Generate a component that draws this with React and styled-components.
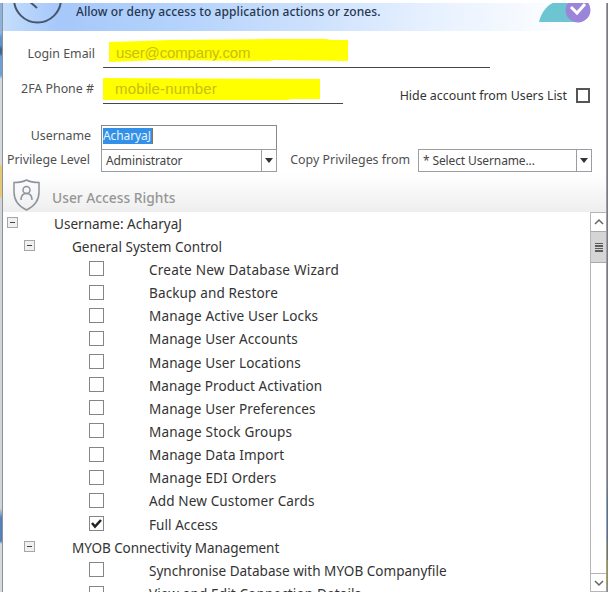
import React from 'react';
import styled, { createGlobalStyle } from 'styled-components';

const GlobalStyle = createGlobalStyle`
  * {
    box-sizing: border-box;
  }

  body {
    margin: 0;
    background: #fff;
    font-family: 'Noto Sans', 'Open Sans', sans-serif;
    font-size: 13px;
    color: #333;
  }
`;

const Screen = styled.div`
  display: flex;
  width: 608px;
  height: 593px;
  padding: 3px 0 1px;
  overflow: hidden;
`;

const leftEdge = 'linear-gradient(#8db2dc 0 30px, #5c93cf 35px 42px, #40658c 46px 50px, #6da0d8 54px 72px, #d6d9dc 76px 160px, #e3ca72 164px 193px, #d2d5d8 196px 505px, #5580b8 515px 538px, #d6d9dc 541px)';
const rightEdge = 'linear-gradient(#777b84 0 480px, #52719c 500px 536px, #77735f 540px 556px, #9c9438 558px 580px, #8c8c8c 584px)';

const Edge = styled.div`
  flex: none;
  width: ${({ $right }) => ($right ? 1 : 2)}px;
  background: ${({ $right }) => ($right ? rightEdge : leftEdge)};
`;

const Window = styled.main`
  flex: 1;
  display: flex;
  flex-direction: column;
  min-width: 0;
  border-left: 1px solid #8e9297;
  border-right: 1px solid #9b9fa5;
`;

const Header = styled.header`
  flex: none;
  display: flex;
  justify-content: space-between;
  height: 28px;
  padding: 0 14px 0 10px;
  background: linear-gradient(90deg, #c4defc 0, #a6c8fa 55px, #b3d2fc 170px, #cfe2fd 320px, #e5f0ff 420px, #f8fbff 530px, #fff 590px);
`;

const HeaderTitle = styled.div`
  flex: 1;
  padding-left: 13px;
  font-size: 12px;
  font-weight: 500;
  line-height: 17px;
  letter-spacing: 0.09px;
  color: #25374f;
  white-space: nowrap;
`;

const Form = styled.section`
  flex: none;
  height: 143px;
  padding-top: 8px;
`;

const Line = styled.div`
  display: flex;
  align-items: flex-start;
  height: ${({ $height }) => $height}px;
`;

const Label = styled.label`
  flex: none;
  width: ${({ $width }) => $width}px;
  padding-top: ${({ $top }) => $top || 0}px;
  padding-right: ${({ $right }) => $right || 0}px;
  font-size: 12.4px;
  line-height: 18px;
  text-align: right;
  white-space: nowrap;
  color: ${({ $dark }) => ($dark ? '#333' : '#505050')};
`;

const Underlined = styled.div`
  display: flex;
  width: ${({ $width }) => $width}px;
  height: ${({ $height }) => $height}px;
  margin-left: ${({ $left }) => $left}px;
  border-bottom: 1px solid #484848;
`;

const Marker = styled.div`
  width: ${({ $width }) => $width}px;
  height: ${({ $height }) => $height}px;
  margin-left: ${({ $left }) => $left || 0}px;
  padding: ${({ $pad }) => $pad};
  background: #ff0;
  clip-path: ${({ $shape }) => $shape};
  font: 15px/20px 'Liberation Sans', Arial, sans-serif;
  letter-spacing: ${({ $tracking }) => $tracking || 0}px;
  color: #c9bd12;
  white-space: nowrap;
`;

const HideBox = styled.span`
  width: 14px;
  height: 15px;
  margin: 10px 0 0 9px;
  border: 2px solid #555;
`;

const TextInput = styled.div`
  width: 176px;
  height: 24px;
  margin-left: 7px;
  padding: 2px 1px;
  border: 1px solid #858a90;
  border-bottom: 0;
`;

const Selection = styled.span`
  display: block;
  width: 50px;
  height: 16px;
  background: #3390e8;
  border-right: 1px solid #8b7448;
  font-size: 12px;
  line-height: 15px;
  letter-spacing: -0.1px;
  color: #e8f4ff;
`;

const Combo = styled.div`
  display: flex;
  width: ${({ $width }) => $width}px;
  height: 23px;
  margin-left: 7px;
  border: 1px solid #9a9da1;
  font-size: 12px;
  line-height: 22px;
  color: #444;
`;

const ComboValue = styled.span`
  flex: 1;
  padding-left: 4px;
  letter-spacing: -0.12px;
  white-space: nowrap;
`;

const ComboButton = styled.span`
  display: flex;
  align-items: center;
  justify-content: center;
  width: 15px;
  border-left: 1px solid #9a9da1;

  &::after {
    content: '';
    border: 4px solid transparent;
    border-top: 5px solid #333;
    border-bottom: 0;
  }
`;

const RightsBar = styled.div`
  flex: none;
  display: flex;
  height: 38px;
  padding-left: 9px;
  background: linear-gradient(#fff, #eee);
`;

const RightsTitle = styled.h2`
  margin: 14px 0 0 10px;
  font-size: 13.8px;
  font-weight: 500;
  line-height: 20px;
  color: #969696;
`;

const Body = styled.section`
  flex: 1;
  display: flex;
  min-height: 0;
`;

const Tree = styled.div`
  flex: 1;
  overflow: hidden;
`;

const Row = styled.div`
  display: flex;
  align-items: center;
  height: 23.17px;
  padding-left: ${({ $level }) => [4, 21, 86][$level]}px;
  font-size: 13.55px;
  letter-spacing: ${({ $tracking }) => $tracking}px;
  white-space: nowrap;
`;

const Toggle = styled.span`
  display: flex;
  align-items: center;
  justify-content: center;
  width: 11px;
  height: 11px;
  margin: -2px ${({ $gap }) => $gap}px 0 0;
  border: 1px solid #a4a7aa;
  background: #f0f0f0;

  &::after {
    content: '';
    width: 5px;
    height: 1px;
    background: #444;
  }
`;

const Check = styled.span`
  display: flex;
  width: 15px;
  height: 15px;
  margin: -2px 45px 0 0;
  border: 1px solid #858585;
`;

const Scrollbar = styled.div`
  display: flex;
  flex-direction: column;
  width: 16px;
  border: 1px solid #b5b5b5;
  border-right: 0;
`;

const ScrollButton = styled.div`
  display: flex;
  align-items: center;
  justify-content: center;
  height: 18px;
  border-top: ${({ $down }) => ($down ? '1px solid #b5b5b5' : '0')};
`;

const Thumb = styled.div`
  display: flex;
  flex-direction: column;
  align-items: center;
  justify-content: center;
  gap: 1px;
  height: 32px;
  background: #d5d5d5;
  border: solid #aaa;
  border-width: 1px 0;

  span {
    width: 8px;
    height: 1.5px;
    background: #5c5c5c;
  }
`;

const Track = styled.div`
  flex: 1;
`;

const rights = [
  { level: 0, text: 'Username: AcharyaJ' },
  { level: 1, text: 'General System Control' },
  { level: 2, text: 'Create New Database Wizard', tracking: 0.22 },
  { level: 2, text: 'Backup and Restore' },
  { level: 2, text: 'Manage Active User Locks', tracking: 0.15 },
  { level: 2, text: 'Manage User Accounts' },
  { level: 2, text: 'Manage User Locations' },
  { level: 2, text: 'Manage Product Activation', tracking: 0.06 },
  { level: 2, text: 'Manage User Preferences' },
  { level: 2, text: 'Manage Stock Groups', tracking: 0.18 },
  { level: 2, text: 'Manage Data Import' },
  { level: 2, text: 'Manage EDI Orders', tracking: 0.15 },
  { level: 2, text: 'Add New Customer Cards' },
  { level: 2, text: 'Full Access', tracking: 0.05, checked: true },
  { level: 1, text: 'MYOB Connectivity Management', tracking: -0.09 },
  { level: 2, text: 'Synchronise Database with MYOB Companyfile', tracking: 0 },
  { level: 2, text: 'View and Edit Connection Details' },
];

const BackIcon = () => (
  <svg width="50" height="28" viewBox="0 0 50 28" fill="none" stroke="#47566c" strokeWidth="2">
    <circle cx="24.5" cy="-4" r="23.5" />
    <path d="M26 -11 L16 -2 L24 5" />
  </svg>
);

const UserCheckIcon = () => (
  <svg width="53" height="28" viewBox="0 0 53 28">
    <path d="M0 19 C3 6 12 -3 27 -3 L36 19 Z" fill="#6cc5d0" />
    <circle cx="39" cy="7" r="12.5" fill="#9b85d8" />
    <path d="M32 4 L38 10 L46 1" fill="none" stroke="#fff" strokeWidth="3" />
  </svg>
);

const ShieldIcon = () => (
  <svg width="30" height="38" viewBox="0 0 30 38" fill="none" stroke="#8c949d" strokeWidth="1.5">
    <path d="M14.500 6 C11 8 7 8.500 2 8.500 V18 C2 26 6 32 14.500 36 C23 32 27 26 27 18 V8.500 C22 8.500 18 8 14.500 6 Z" />
    <circle cx="14.500" cy="16" r="3.500" />
    <path d="M9 26 C9 22 11 19.500 14.500 19.500 C18 19.500 20 22 20 26" />
  </svg>
);

const App = () => (
  <>
    <GlobalStyle />
    <Screen>
      <Edge />
      <Window>
        <Header>
          <BackIcon />
          <HeaderTitle>Allow or deny access to application actions or zones.</HeaderTitle>
          <UserCheckIcon />
        </Header>
        <Form>
          <Line $height={39}>
            <Label $width={92} $top={6}>Login Email</Label>
            <Underlined $left={8} $width={387} $height={29}>
              <Marker
                $left={6}
                $width={239}
                $height={23}
                $pad="4px 0 0 7px"
                $tracking={-0.15}
                $shape="polygon(0 3px, 33px 2px, 60px 1px, 160px 0, 217px 0, 222px 1px, 100% 1px, 100% 22px, 165px 21px, 160px 22px, 50px 21px, 0 23px)"
              >
                user@company.com
              </Marker>
            </Underlined>
          </Line>
          <Line $height={47}>
            <Label $width={92} $right={1} $top={2}>2FA Phone #</Label>
            <Underlined $left={8} $width={240} $height={26}>
              <Marker
                $width={217}
                $height={22}
                $pad="1px 0 0 12px"
                $tracking={0.15}
                $shape="polygon(0 0, 100% 1px, 100% 21px, 190px 21px, 183px 22px, 0 22px)"
              >
                mobile-number
              </Marker>
            </Underlined>
            <Label $width={224} $top={9} $dark>Hide account from Users List</Label>
            <HideBox />
          </Line>
          <Line $height={24}>
            <Label $width={91} $right={3} $top={2}>Username</Label>
            <TextInput><Selection>AcharyaJ</Selection></TextInput>
          </Line>
          <Line $height={23}>
            <Label $width={91} $right={4} $top={2}>Privilege Level</Label>
            <Combo $width={176}>
              <ComboValue>Administrator</ComboValue>
              <ComboButton />
            </Combo>
            <Label $width={134} $right={1} $top={2}>Copy Privileges from</Label>
            <Combo $width={174}>
              <ComboValue>* Select Username...</ComboValue>
              <ComboButton />
            </Combo>
          </Line>
        </Form>
        <RightsBar>
          <ShieldIcon />
          <RightsTitle>User Access Rights</RightsTitle>
        </RightsBar>
        <Body>
          <Tree>
            {rights.map(({ level, text, tracking, checked }) => (
              <Row key={text} $level={level} $tracking={tracking ?? (level === 2 ? 0.12 : 0)}>
                {level < 2 ?
                  <Toggle $gap={level === 0 ? 36 : 37} />
                  :
                  <Check>
                    {checked && (
                      <svg width="13" height="13" viewBox="0 0 13 13" fill="none" stroke="#222" strokeWidth="2.500">
                        <path d="M2 6 L5 9.500 L11 3" />
                      </svg>
                    )}
                  </Check>
                }
                <span>{text}</span>
              </Row>
            ))}
          </Tree>
          <Scrollbar>
            <ScrollButton>
              <svg width="10" height="8" viewBox="0 0 10 8" fill="none" stroke="#666" strokeWidth="1.500">
                <path d="M1 6 L5 2 L9 6" />
              </svg>
            </ScrollButton>
            <Thumb>
              <span />
              <span />
              <span />
              <span />
            </Thumb>
            <Track />
            <ScrollButton $down>
              <svg width="10" height="8" viewBox="0 0 10 8" fill="none" stroke="#666" strokeWidth="1.500">
                <path d="M1 2 L5 6 L9 2" />
              </svg>
            </ScrollButton>
          </Scrollbar>
        </Body>
      </Window>
      <Edge $right />
    </Screen>
  </>
);

export default App;
